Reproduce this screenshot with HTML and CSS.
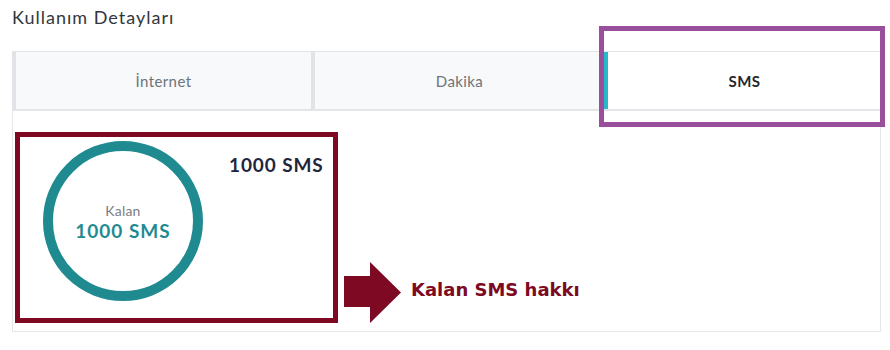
FILE: index.html
```html
<!DOCTYPE html>
<html lang="tr">
<head>
    <meta charset="UTF-8">
    <meta name="viewport" content="width=device-width, initial-scale=1.0">
    <title>Kullanım Detayları</title>
    <link rel="stylesheet" href="styles.css">
</head>
<body>
    <div class="page">
        <h2 class="title">Kullanım Detayları</h2>

        <div class="tabs">
            <div class="tab">İnternet</div>
            <div class="tab">Dakika</div>
            <div class="tab active">SMS</div>
        </div>

        <div class="panel">
            <div class="usage">
                <div class="ring">
                    <svg width="160" height="160" viewBox="0 0 160 160">
                        <circle cx="80" cy="80" r="75" fill="none" stroke="#1f8b91" stroke-width="10"/>
                    </svg>
                    <div class="ring-text">
                        <div class="ring-label">Kalan</div>
                        <div class="ring-value">1000 SMS</div>
                    </div>
                </div>
                <div class="total">1000 SMS</div>
            </div>
        </div>

        <!-- açıklama işaretleri -->
        <div class="mark mark-tab"></div>
        <div class="mark mark-usage"></div>
        <div class="hint">
            <svg width="58" height="61" viewBox="0 0 58 61">
                <path d="M0 14 H26 V0 L57 30.5 L26 61 V45 H0 Z" fill="#7d0a22"/>
            </svg>
            <span>Kalan SMS hakkı</span>
        </div>
    </div>
</body>
</html>
```

FILE: styles.css
```css
* {
    margin: 0;
    padding: 0;
    box-sizing: border-box;
}
body {
    font-family: Lato, "Open Sans", sans-serif;
    background: #fff;
    color: #2b2d33;
}
.page {
    position: relative;
    width: 890px;
    height: 350px;
    padding: 5px 9px 0 12px;
}
.title {
    font-size: 18px;
    font-weight: 400;
    color: #34363c;
    line-height: 24px;
    letter-spacing: 1px;
}
.tabs {
    display: grid;
    grid-template-columns: 299px 293px 1fr;
    margin-top: 22px;
    border-top: 1px solid #e3e5e8;
    border-bottom: 2px solid #e3e5e8;
}
.tab {
    height: 57px;
    display: flex;
    align-items: center;
    justify-content: center;
    background: #f7f9fa;
    border-left: 4px solid #e1e3e7;
    font-size: 15px;
    color: #6f7278;
    letter-spacing: 0.4px;
}
.tab.active {
    background: #fff;
    border-left-color: #25b9c9;
    color: #25272d;
    font-weight: 700;
}
.panel {
    height: 221px;
    border: 1px solid #e6e7ea;
    border-top: none;
    padding: 30px 0 0 30px;
}
.usage {
    display: flex;
    align-items: flex-start;
}
.ring {
    position: relative;
    width: 160px;
    height: 160px;
}
.ring svg {
    display: block;
}
.ring-text {
    position: absolute;
    inset: 0;
    display: flex;
    flex-direction: column;
    align-items: center;
    justify-content: center;
    padding-top: 2px;
}
.ring-label {
    font-size: 14px;
    color: #7b7d82;
    line-height: 18px;
    letter-spacing: 0.2px;
}
.ring-value {
    font-size: 19px;
    font-weight: 700;
    color: #1f8b91;
    line-height: 22px;
    letter-spacing: 1px;
}
.total {
    margin: 12px 0 0 26px;
    font-size: 19px;
    font-weight: 700;
    color: #22253a;
    letter-spacing: 0.9px;
}
.mark {
    position: absolute;
    border: 5px solid #9a4f9d;
}
.mark-tab {
    left: 599px;
    top: 26px;
    width: 286px;
    height: 101px;
}
.mark-usage {
    left: 15px;
    top: 132px;
    width: 323px;
    height: 191px;
    border-color: #7d0a22;
}
.hint {
    position: absolute;
    left: 344px;
    top: 262px;
    display: flex;
    align-items: center;
    gap: 9px;
}
.hint svg {
    display: block;
}
.hint span {
    margin-bottom: 6px;
    font-family: "DejaVu Sans", Verdana, sans-serif;
    font-weight: 700;
    font-size: 18px;
    color: #7d0a22;
}
```
